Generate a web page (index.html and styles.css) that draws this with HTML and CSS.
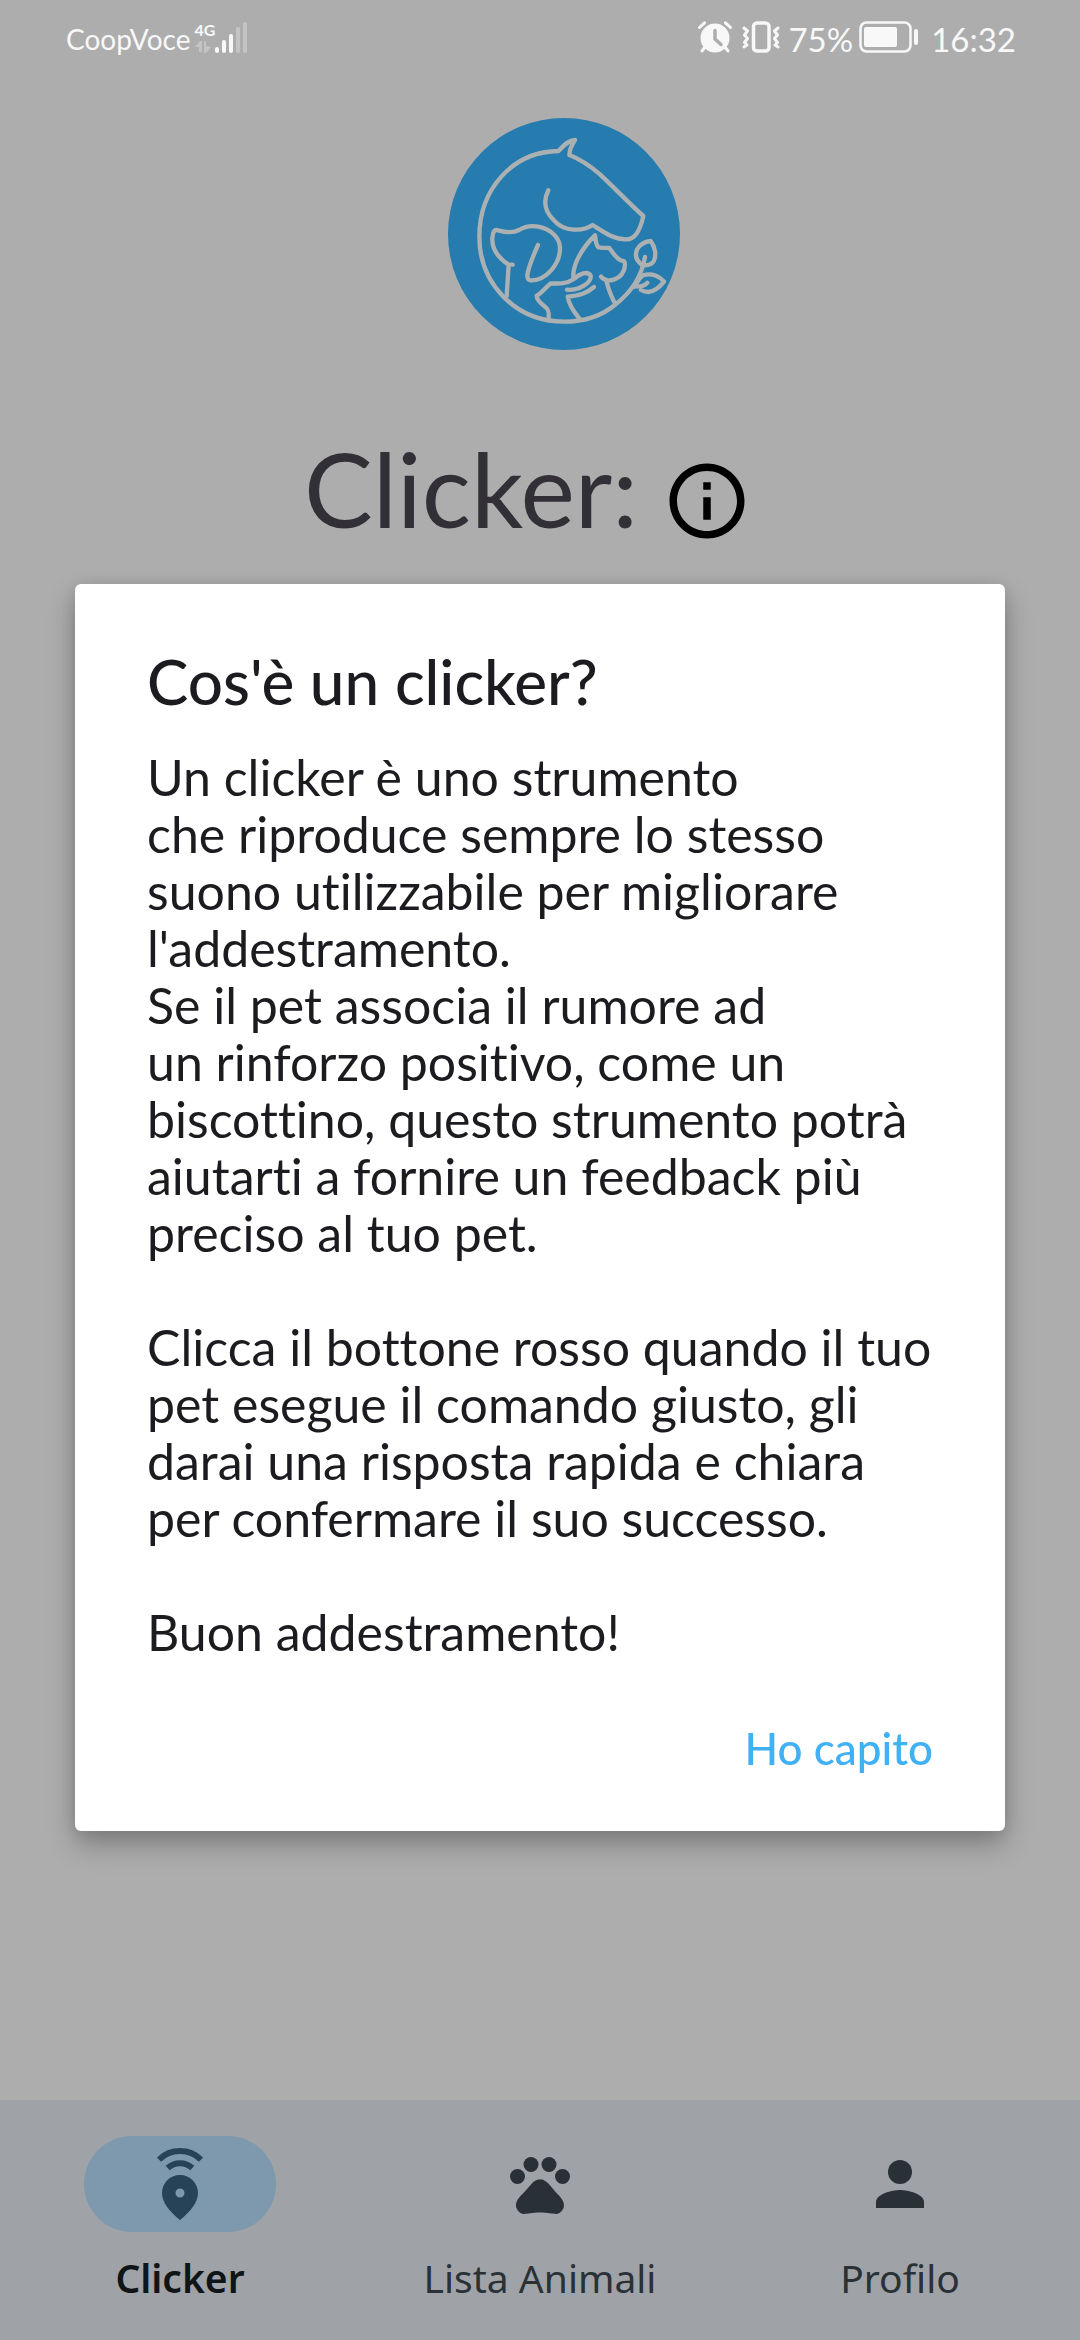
FILE: index.html
```html
<!DOCTYPE html>
<html lang="it">
<head>
<meta charset="utf-8">
<meta name="viewport" content="width=device-width, initial-scale=1">
<title>Clicker</title>
<link rel="stylesheet" href="styles.css">
</head>
<body>
<div class="app">
  <header class="status">
    <div class="status-group">
      <span class="carrier">CoopVoce</span>
      <span class="network">
        <span class="network-type">4G</span>
        <svg width="16" height="12" viewBox="0 0 16 12" aria-hidden="true"><path d="M0 6L5 0H7V11H4V6ZM9 0H11V5L16 6L11 12H9Z" fill="#c4c4c4"/></svg>
      </span>
      <svg width="33" height="31" viewBox="0 0 33 31" aria-hidden="true">
        <g fill="#f8f8f8"><rect y="25" width="4" height="6" rx="2"/><rect x="7" y="18" width="4" height="13" rx="2"/><rect x="14" y="12" width="4" height="19" rx="2"/></g>
        <g fill="#c4c4c4"><rect x="21" y="5" width="4" height="26" rx="2"/><rect x="28" width="4" height="31" rx="2"/></g>
      </svg>
    </div>
    <div class="status-group status-end">
      <svg width="34" height="32" viewBox="0 0 34 32" aria-hidden="true">
        <circle cx="17" cy="17" r="14.5" fill="#f8f8f8"/>
        <path d="M1.500 6.500L6.500 1.800M32.500 6.500L27.500 1.800M7 26L4 30M27 26L30 30" stroke="#f8f8f8" stroke-width="3" stroke-linecap="round"/>
        <path d="M17 9.500V18L23 23.500" fill="none" stroke="#adadad" stroke-width="3.500" stroke-linecap="round"/>
      </svg>
      <svg class="vibrate" width="38" height="32" viewBox="0 0 38 32" fill="none" stroke="#f8f8f8" aria-hidden="true">
        <rect x="11.500" y="2" width="15.500" height="28" rx="3.500" stroke-width="3.500"/>
        <path d="M2 7L5.500 10L2.500 14L5.500 17.500L2.500 21.500L5 24L2 26M36 7L32.500 10L35.500 14L32.500 17.500L35.500 21.500L33 24L36 26" stroke-width="3" stroke-linecap="round" stroke-linejoin="round"/>
      </svg>
      <span class="percent">75%</span>
      <svg class="battery" width="60" height="32" viewBox="0 0 60 32" aria-hidden="true">
        <rect x="1.500" y="1.500" width="50" height="29" rx="6" fill="none" stroke="#f8f8f8" stroke-width="2.500"/>
        <rect x="5" y="6" width="33" height="20" rx="2" fill="#f8f8f8"/>
        <rect x="55" y="8" width="4" height="16" rx="2" fill="#f8f8f8"/>
      </svg>
      <span>16:32</span>
    </div>
  </header>

  <main class="content">
    <svg class="logo" viewBox="24 24 696 696" role="img" aria-label="Logo con cavallo, cane e gatto">
      <circle cx="372" cy="372" r="348" fill="#267cae"/>
      <g fill="none" stroke="#abb0b2" stroke-width="13" stroke-linecap="round" stroke-linejoin="round">
        <path d="M615 441C606 494 575 545 528 582C486 618 432 635 372 635C226 635 118 520 118 380C118 240 215 125 355 123C370 110 380 92 405 90C395 105 388 118 388 135C425 149 451 168 480 193C525 235 570 283 610 318C603 350 590 388 560 388C522 390 490 365 458 345C430 364 372 367 342 331C315 305 308 275 325 241"/>
        <path d="M218 464H206C186 451 155 427 157 385C158 366 163 357 174 361C195 367 217 371 237 360C256 348 275 346 295 350C335 358 360 385 360 415C360 460 320 512 272 511C262 510 260 500 264 485C270 460 285 425 294 405M206 464L200 558"/>
        <path d="M400 500C398 460 430 410 465 376C468 387 465 401 475 412C485 416 495 412 508 414C520 430 530 448 545 452C559 452 555 468 552 480C545 500 525 510 505 512C495 511 488 506 483 500M500 515C505 540 515 560 522 575"/>
        <path d="M326 625C328 605 325 597 315 590C302 580 290 568 290 557C305 550 315 533 333 520C360 521 380 522 400 508C420 490 443 482 452 497C455 515 430 530 415 535C402 540 390 540 381 539M462 531C440 550 420 556 383 560C388 590 405 610 418 625"/>
        <path d="M606 465C587 450 583 435 592 417C600 403 615 395 632 393C645 410 650 435 642 452C635 465 620 467 606 465M583 530C592 520 597 500 612 495C635 488 660 500 672 515C660 530 645 545 625 546C615 546 608 543 603 540M583 530C600 530 615 528 622 518"/>
      </g>
    </svg>
    <div class="heading">
      <h1 class="title">Clicker:</h1>
      <button class="info" type="button" aria-label="Informazioni">
        <svg viewBox="0 0 24 24" aria-hidden="true"><path d="M11 7h2v2h-2zm0 4h2v6h-2zm1-9C6.480 2 2 6.480 2 12s4.480 10 10 10 10-4.480 10-10S17.520 2 12 2zm0 18c-4.410 0-8-3.590-8-8s3.590-8 8-8 8 3.590 8 8-3.590 8-8 8z"/></svg>
      </button>
    </div>
  </main>

  <nav class="nav">
    <a class="nav-item active" href="#clicker" aria-current="page">
      <span class="pill">
        <svg viewBox="0 0 72 72" aria-hidden="true"><path d="M15 11.700A30 30 0 0 1 57 11.700M23.700 20A18 18 0 0 1 48.300 20" fill="none" stroke="currentColor" stroke-width="6"/><path d="M36 27C26 27 18 35 18 45C18 54 25 63 36 72C47 63 54 54 54 45C54 35 46 27 36 27ZM36 40.500a4.500 4.500 0 1 1 0 9a4.500 4.500 0 0 1 0-9Z" fill="currentColor" fill-rule="evenodd"/></svg>
      </span>
      <span class="nav-label">Clicker</span>
    </a>
    <a class="nav-item" href="#animali">
      <span class="pill">
        <svg viewBox="0 0 24 24" fill="currentColor" aria-hidden="true"><circle cx="4.500" cy="9.500" r="2.500"/><circle cx="9" cy="5.500" r="2.500"/><circle cx="15" cy="5.500" r="2.500"/><circle cx="19.500" cy="9.500" r="2.500"/><path d="M17.340 14.860c-.87-1.020-1.600-1.890-2.480-2.910-.46-.54-1.050-1.080-1.750-1.320-.11-.04-.22-.07-.33-.09-.25-.04-.52-.04-.78-.04s-.53 0-.79.05c-.11.02-.22.05-.33.09-.7.24-1.280.78-1.750 1.320-.87 1.020-1.600 1.890-2.480 2.910-1.310 1.310-2.920 2.760-2.620 4.790.29 1.020 1.020 2.030 2.330 2.320.73.15 3.060-.44 5.540-.44h.18c2.480 0 4.810.58 5.540.44 1.310-.29 2.040-1.310 2.330-2.320.31-2.040-1.300-3.490-2.610-4.800z"/></svg>
      </span>
      <span class="nav-label">Lista Animali</span>
    </a>
    <a class="nav-item" href="#profilo">
      <span class="pill">
        <svg viewBox="0 0 24 24" fill="currentColor" aria-hidden="true"><circle cx="12" cy="8" r="4"/><path d="M12 14c-2.670 0-8 1.340-8 4v2h16v-2c0-2.660-5.330-4-8-4z"/></svg>
      </span>
      <span class="nav-label">Profilo</span>
    </a>
  </nav>
</div>

<div class="overlay">
  <section class="dialog" role="dialog" aria-modal="true" aria-labelledby="dialog-title">
    <h2 class="dialog-title" id="dialog-title">Cos'è un clicker?</h2>
    <div class="dialog-text">
      <p>Un clicker è uno strumento<br>che riproduce sempre lo stesso<br>suono utilizzabile per migliorare<br>l'addestramento.<br>Se il pet associa il rumore ad<br>un rinforzo positivo, come un<br>biscottino, questo strumento potrà<br>aiutarti a fornire un feedback più<br>preciso al tuo pet.</p>
      <p>Clicca il bottone rosso quando il tuo<br>pet esegue il comando giusto, gli<br>darai una risposta rapida e chiara<br>per confermare il suo successo.</p>
      <p>Buon addestramento!</p>
    </div>
    <button class="confirm" type="button">Ho capito</button>
  </section>
</div>
</body>
</html>
```
FILE: styles.css
```css
* {
  box-sizing: border-box;
  margin: 0;
}

body {
  background: #adadad;
  color: #1c1b1f;
  font-family: Lato, "Noto Sans", sans-serif;
  font-variant-ligatures: none;
}

svg {
  display: block;
  flex: none;
}

button {
  padding: 0;
  border: 0;
  background: none;
  color: inherit;
  font: inherit;
}

.app {
  display: flex;
  flex-direction: column;
  min-height: 100vh;
}

/* Status bar */
.status {
  display: flex;
  justify-content: space-between;
  height: 74px;
  padding: 0 64px 0 66px;
  color: #f8f8f8;
}

.status-group {
  display: flex;
  align-items: center;
}

.carrier {
  padding-top: 4px;
  font-size: 28px;
  line-height: 40px;
}

.network {
  display: flex;
  flex-direction: column;
  gap: 3px;
  margin-left: 4px;
}

.network-type {
  font-size: 16px;
  font-weight: 700;
  line-height: 16px;
}

.status-end {
  font-size: 33px;
  line-height: 40px;
}

.status-end span {
  padding-top: 4px;
}

.vibrate {
  margin: 0 8px 0 10px;
}

.battery {
  margin: 0 12px 0 6px;
}

/* Page */
.content {
  display: flex;
  flex: 1;
  flex-direction: column;
  align-items: center;
  padding-top: 44px;
}

.logo {
  width: 232px;
  height: 232px;
  margin-left: 48px;
}

.heading {
  display: flex;
  align-items: flex-end;
  gap: 24px;
  margin-top: 80px;
  padding-right: 24px;
}

.title {
  color: #322f37;
  font-size: 103px;
  font-weight: 400;
  line-height: 116px;
}

.info {
  width: 90px;
  height: 90px;
  color: #000;
}

/* Bottom navigation */
.nav {
  display: flex;
  padding: 36px 0;
  background: #9fa2a7;
}

.nav-item {
  display: flex;
  flex: 1;
  flex-direction: column;
  align-items: center;
  gap: 20px;
  color: #293136;
  text-decoration: none;
}

.pill {
  display: grid;
  place-items: center;
  width: 192px;
  height: 96px;
  border-radius: 48px;
}

.pill svg {
  width: 72px;
  height: 72px;
}

.nav-label {
  font-family: "Noto Sans", sans-serif;
  font-size: 39px;
  line-height: 52px;
}

.active .pill {
  background: #7e98ad;
  color: #264358;
}

.active .nav-label {
  color: #0f1417;
  font-weight: 600;
}

/* Dialog */
.overlay {
  position: fixed;
  inset: 0;
  display: flex;
  align-items: center;
  padding: 74px 75px 0;
}

.dialog {
  display: flex;
  flex: 1;
  flex-direction: column;
  padding: 61px 72px 56px;
  border-radius: 6px;
  background: #fff;
  box-shadow: 0 14px 28px rgba(0, 0, 0, 0.25), 0 2px 18px rgba(0, 0, 0, 0.12);
}

.dialog-title {
  font-size: 62px;
  font-weight: 500;
  line-height: 72px;
}

.dialog-text {
  display: grid;
  gap: 57px;
  margin: 32px 0 60px;
  font-size: 50px;
  line-height: 57px;
  white-space: nowrap;
}

.confirm {
  align-self: flex-end;
  color: #41b1f5;
  font-size: 44px;
  font-weight: 500;
  line-height: 54px;
}
```
